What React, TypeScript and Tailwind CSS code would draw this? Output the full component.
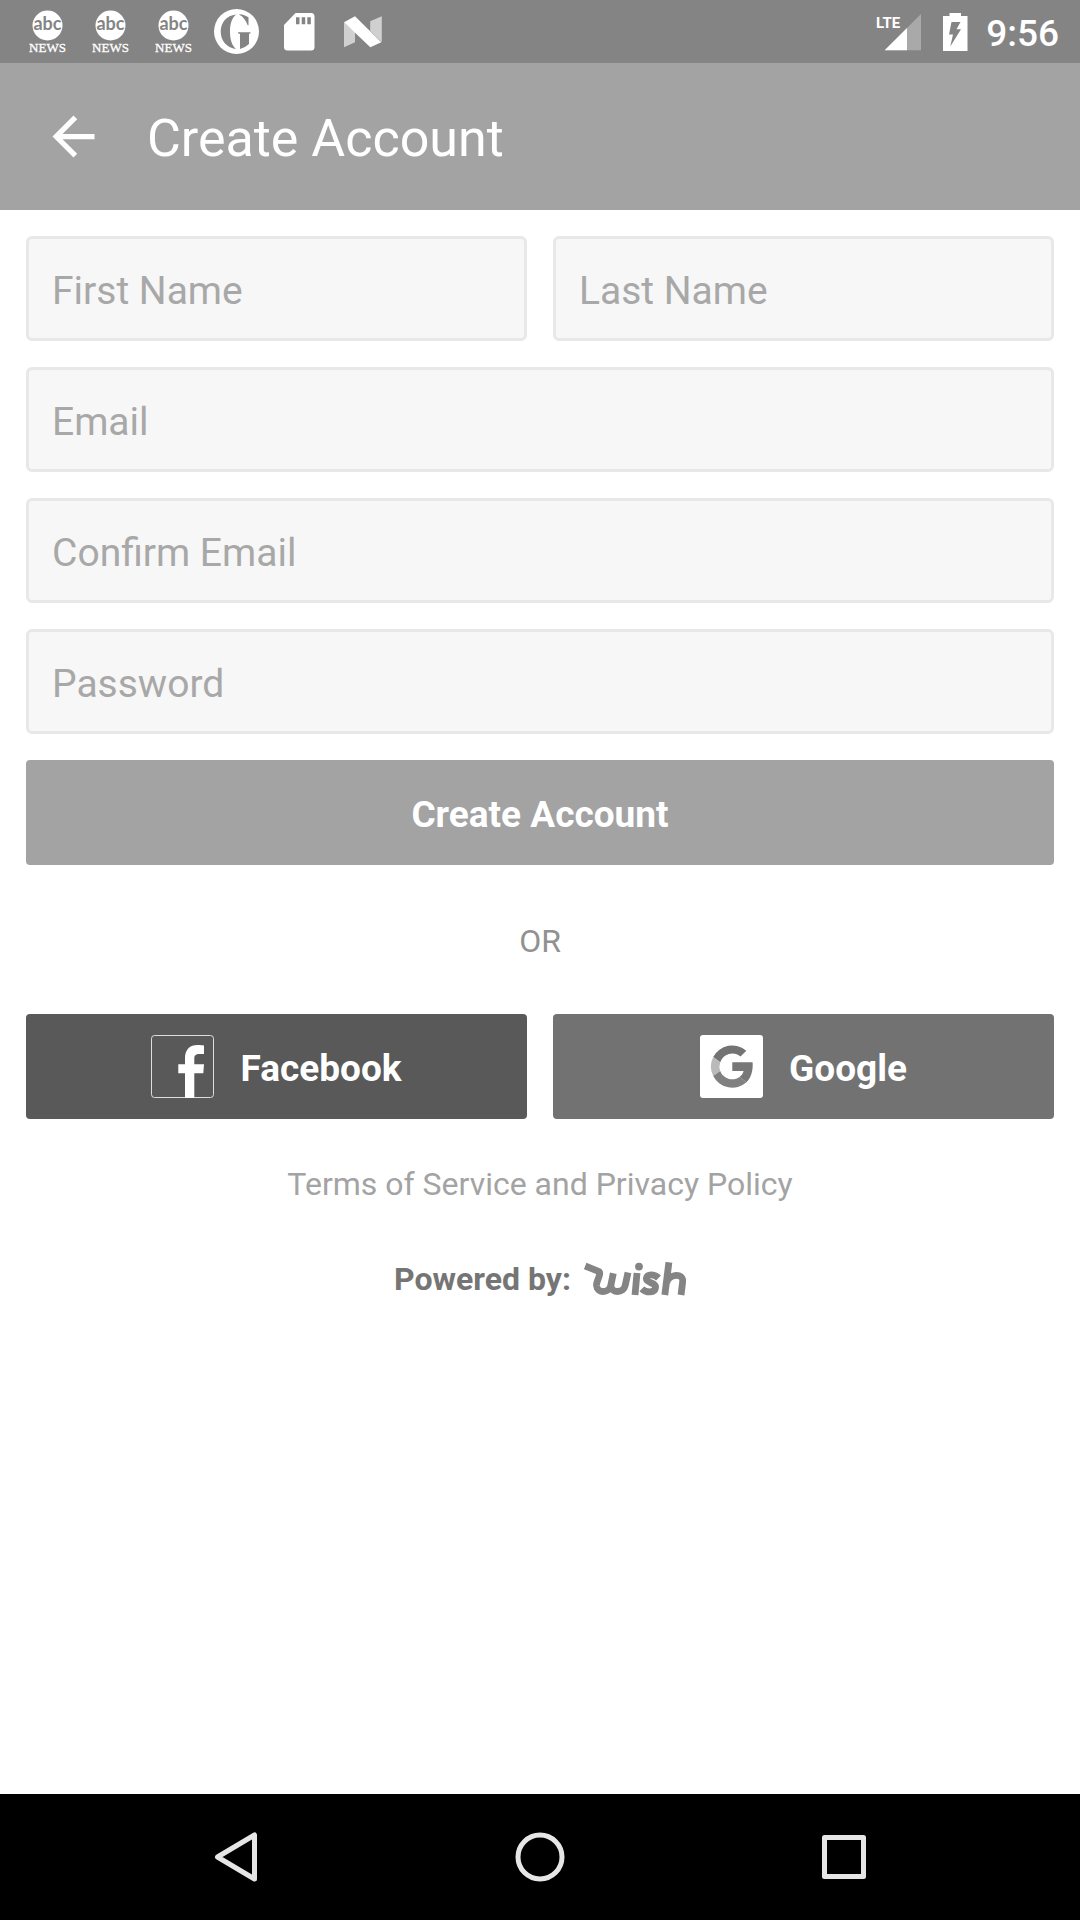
import React from "react";

function AbcNewsIcon() {
  return (
    <svg width="37" height="44" viewBox="0 0 37 44" aria-label="abc NEWS" role="img">
      <circle cx="18.5" cy="15.5" r="15" fill="#fff" />
      <text x="18.5" y="20" textAnchor="middle" fontFamily="Lato, sans-serif" fontSize="18" fontWeight="700" fill="#848484">
        abc
      </text>
      <text
        x="18.5"
        y="42"
        textAnchor="middle"
        fontFamily="'Liberation Serif', serif"
        fontSize="13"
        fill="#fff"
        stroke="#fff"
        strokeWidth=".3"
      >
        NEWS
      </text>
    </svg>
  );
}

function GuardianIcon() {
  return (
    <svg width="45" height="45" viewBox="0 0 45 45" aria-hidden="true">
      <circle cx="22.5" cy="22.5" r="22.5" fill="#fff" />
      <g fill="#848484">
        <path d="M22 5.4C12.500 6.500 6.700 13.500 6.700 22.600S12.500 38.800 22 40C17.800 36.500 16 30.500 16 22.600S17.800 9 22 5.400z" />
        <path d="M25.300 5.200C29 5.500 32 6.500 34.500 8.300V16.200H33.700C31.500 11 29 7.500 25.300 5.800z" />
        <path d="M24 23.200H36.500V24.200L35 25V35C32.500 37.300 29.500 39 26 40V25L24 24.200z" />
      </g>
    </svg>
  );
}

function SdCardIcon() {
  return (
    <svg width="31" height="38" viewBox="0 0 31 38" aria-hidden="true">
      <path d="M11.500 0H27a3.500 3.500 0 0 1 3.500 3.500V34a3.500 3.500 0 0 1-3.500 3.500H3.500A3.500 3.500 0 0 1 0 34V12z" fill="#fff" />
      <path d="M12 4.300h3.500v7H12zM17.700 4.300h3.500v7h-3.500zM23.300 4.300h3.500v7h-3.500z" fill="#848484" />
    </svg>
  );
}

function NougatIcon() {
  return (
    <svg width="38" height="32" viewBox="0 0 38 32" aria-hidden="true">
      <path d="M0 6.300V31.300L11 26.300V16zM26.200 5.300L37.800.3V26.300L26.200 15z" fill="#d0d0d0" />
      <path d="M0 6.300L11 .3L37.300 26.300L26.300 31.300z" fill="#fff" />
    </svg>
  );
}

function SignalIcon() {
  return (
    <svg width="46" height="38" viewBox="0 0 46 38" aria-label="LTE signal" role="img">
      <path d="M8.700 37.300L45 1V37.300z" fill="#a9a9a9" />
      <path d="M8.700 37.300L31 15V37.300z" fill="#fff" />
      <text x="0" y="15" fontFamily="Roboto, sans-serif" fontSize="15" fontWeight="700" fill="#fff">
        LTE
      </text>
    </svg>
  );
}

function BatteryIcon() {
  return (
    <svg width="25" height="38" viewBox="0 0 25 38" aria-hidden="true">
      <path d="M6.500 0H18V3H24.500V38H0V3H6.500z" fill="#fff" />
      <path d="M8.500 9H17.500L13.500 16.300H18L7.300 33.500L10 21.500H6z" fill="#848484" />
    </svg>
  );
}

function StatusBar() {
  return (
    <div className="flex h-[63px] items-center justify-between bg-[#848484] pr-[21px] pl-[29px]">
      <div className="flex items-center">
        <div className="flex gap-[26px]">
          <AbcNewsIcon />
          <AbcNewsIcon />
          <AbcNewsIcon />
        </div>
        <div className="ml-[22px] flex items-center">
          <GuardianIcon />
        </div>
        <div className="ml-[25px] flex items-center gap-[29px]">
          <SdCardIcon />
          <NougatIcon />
        </div>
      </div>
      <div className="flex items-center text-white">
        <SignalIcon />
        <span className="ml-[21px]">
          <BatteryIcon />
        </span>
        <span className="ml-[18px] pt-1 text-[37px] leading-[40px] font-medium">9:56</span>
      </div>
    </div>
  );
}

function AppBar() {
  return (
    <header className="flex h-[147px] items-center bg-[#a3a3a3] pl-[42px] text-white">
      <button type="button" aria-label="Back" className="shrink-0">
        <svg width="63" height="63" viewBox="0 0 24 24" fill="currentColor">
          <path d="M20 11H7.830l5.590-5.590L12 4l-8 8 8 8 1.410-1.410L7.830 13H20v-2z" />
        </svg>
      </button>
      <h1 className="ml-[42px] pt-1 text-[52px] leading-[60px]">Create Account</h1>
    </header>
  );
}

function Field({ label, type, name }: { label: string; type: string; name: string }) {
  return (
    <input
      type={type}
      name={name}
      aria-label={label}
      placeholder={label}
      className="h-[105px] w-full min-w-0 rounded-md border-3 border-[#e8e8e8] bg-[#f7f7f7] px-[23px] pt-1 text-[39px] text-[#555] outline-none placeholder:text-[#a8a8a8]"
    />
  );
}

function FacebookIcon() {
  return (
    <svg width="63" height="63" viewBox="0 0 63 63" aria-hidden="true">
      <rect x=".5" y=".5" width="62" height="62" rx="3" fill="none" stroke="#dedede" />
      <path
        d="M34 63V38.300H27.300V29.300H34V23C34 14.500 39 10 46.500 10C49.500 10 52 10.200 53 10.500V19H48.500C44.500 19 43.300 20.600 43.300 23.500V29.300H53L52.300 38.300H43.300V63z"
        fill="#fff"
      />
    </svg>
  );
}

function GoogleIcon() {
  return (
    <svg width="63" height="63" viewBox="0 0 63 63" aria-hidden="true">
      <rect width="63" height="63" rx="3" fill="#fff" />
      <path d="M46.300 15.700A21.500 21.500 0 0 0 13.200 22L20.200 27.300A12.700 12.700 0 0 1 40.500 21.600z" fill="#737373" />
      <path d="M13.200 22A21.500 21.500 0 0 0 13.200 41L20.200 36A12.700 12.700 0 0 1 20.200 27.300z" fill="#bababa" />
      <path d="M13.200 41A21.500 21.500 0 0 0 46.500 47.300L39.500 42A12.700 12.700 0 0 1 20.200 36z" fill="#808080" />
      <path d="M32.300 27.300H52.600C53.300 35.500 51 43 46.500 47.300L39.500 42C41.500 40.600 43 38.500 43.600 36H32.300z" fill="#777" />
    </svg>
  );
}

function WishLogo() {
  return (
    <svg width="102" height="34" viewBox="0 0 102 34" aria-label="wish" role="img">
      <g fill="none" stroke="#848484" strokeWidth="6.800" strokeLinejoin="round">
        <path d="M1.200 4L14.500 9.300C15.800 10 16 10.800 15.600 12.500C14.500 17.500 12.300 19.500 12.500 23.500C13.200 31.500 25 31.500 26.800 23.500L29.300 11.300" />
        <path d="M26.800 23.500C27.500 31.500 39.500 31.500 41.200 23.500L44 10.500" />
        <path d="M53 11L51 33" />
        <path d="M74.500 16C70.500 12 62.500 11.500 62.300 16.500C62.200 21.500 72 20 71.600 25.300C71 31.500 62 31 57.800 26.800" />
        <path d="M84.900 .3L80.800 33" />
        <path d="M82.500 21C85 11.500 99.500 10.500 98.700 19.500L97 33" />
      </g>
      <circle cx="55" cy="4.600" r="3.900" fill="#848484" />
    </svg>
  );
}

function NavBar() {
  return (
    <nav className="grid h-[126px] grid-cols-3 items-center justify-items-center bg-black px-[84px]">
      <button type="button" aria-label="Back">
        <svg width="50" height="50" viewBox="0 0 50 50" fill="none" stroke="#e6e6e6" strokeWidth="5" strokeLinejoin="round">
          <path d="M43.500 3V47L6.500 25z" />
        </svg>
      </button>
      <button type="button" aria-label="Home">
        <svg width="50" height="50" viewBox="0 0 50 50" fill="none" stroke="#e6e6e6" strokeWidth="5">
          <circle cx="25" cy="25" r="22" />
        </svg>
      </button>
      <button type="button" aria-label="Recent apps">
        <svg width="50" height="50" viewBox="0 0 50 50" fill="none" stroke="#e6e6e6" strokeWidth="5" strokeLinejoin="round">
          <rect x="5.500" y="5.500" width="39" height="39" />
        </svg>
      </button>
    </nav>
  );
}

export default function App() {
  return (
    <div className="flex min-h-screen flex-col bg-white font-[Roboto,sans-serif]">
      <StatusBar />
      <AppBar />
      <main className="flex flex-1 flex-col px-[26px] pt-[26px]">
        <form className="flex flex-col gap-[26px]" onSubmit={(e) => e.preventDefault()}>
          <div className="grid grid-cols-2 gap-[26px]">
            <Field label="First Name" type="text" name="firstName" />
            <Field label="Last Name" type="text" name="lastName" />
          </div>
          <Field label="Email" type="email" name="email" />
          <Field label="Confirm Email" type="email" name="confirmEmail" />
          <Field label="Password" type="password" name="password" />
          <button type="submit" className="h-[105px] rounded-sm bg-[#a3a3a3] pt-1 text-[37px] font-bold text-white">
            Create Account
          </button>
        </form>
        <p className="mt-[56px] text-center text-[32px] leading-[40px] text-[#919191]">OR</p>
        <div className="mt-[53px] grid grid-cols-2 gap-[26px] text-[37px] font-bold text-white">
          <button type="button" className="flex h-[105px] items-center justify-center gap-[26px] rounded-sm bg-[#595959]">
            <FacebookIcon />
            <span className="pt-1">Facebook</span>
          </button>
          <button type="button" className="flex h-[105px] items-center justify-center gap-[26px] rounded-sm bg-[#727272]">
            <GoogleIcon />
            <span className="pt-1">Google</span>
          </button>
        </div>
        <p className="mt-[45px] text-center text-[32px] leading-[40px] text-[#a3a3a3]">
          <a href="#terms">Terms of Service</a> and <a href="#privacy">Privacy Policy</a>
        </p>
        <div className="mt-[55px] flex items-center justify-center gap-[13px]">
          <span className="text-[32px] leading-[40px] font-bold text-[#757575]">Powered by:</span>
          <WishLogo />
        </div>
      </main>
      <NavBar />
    </div>
  );
}
